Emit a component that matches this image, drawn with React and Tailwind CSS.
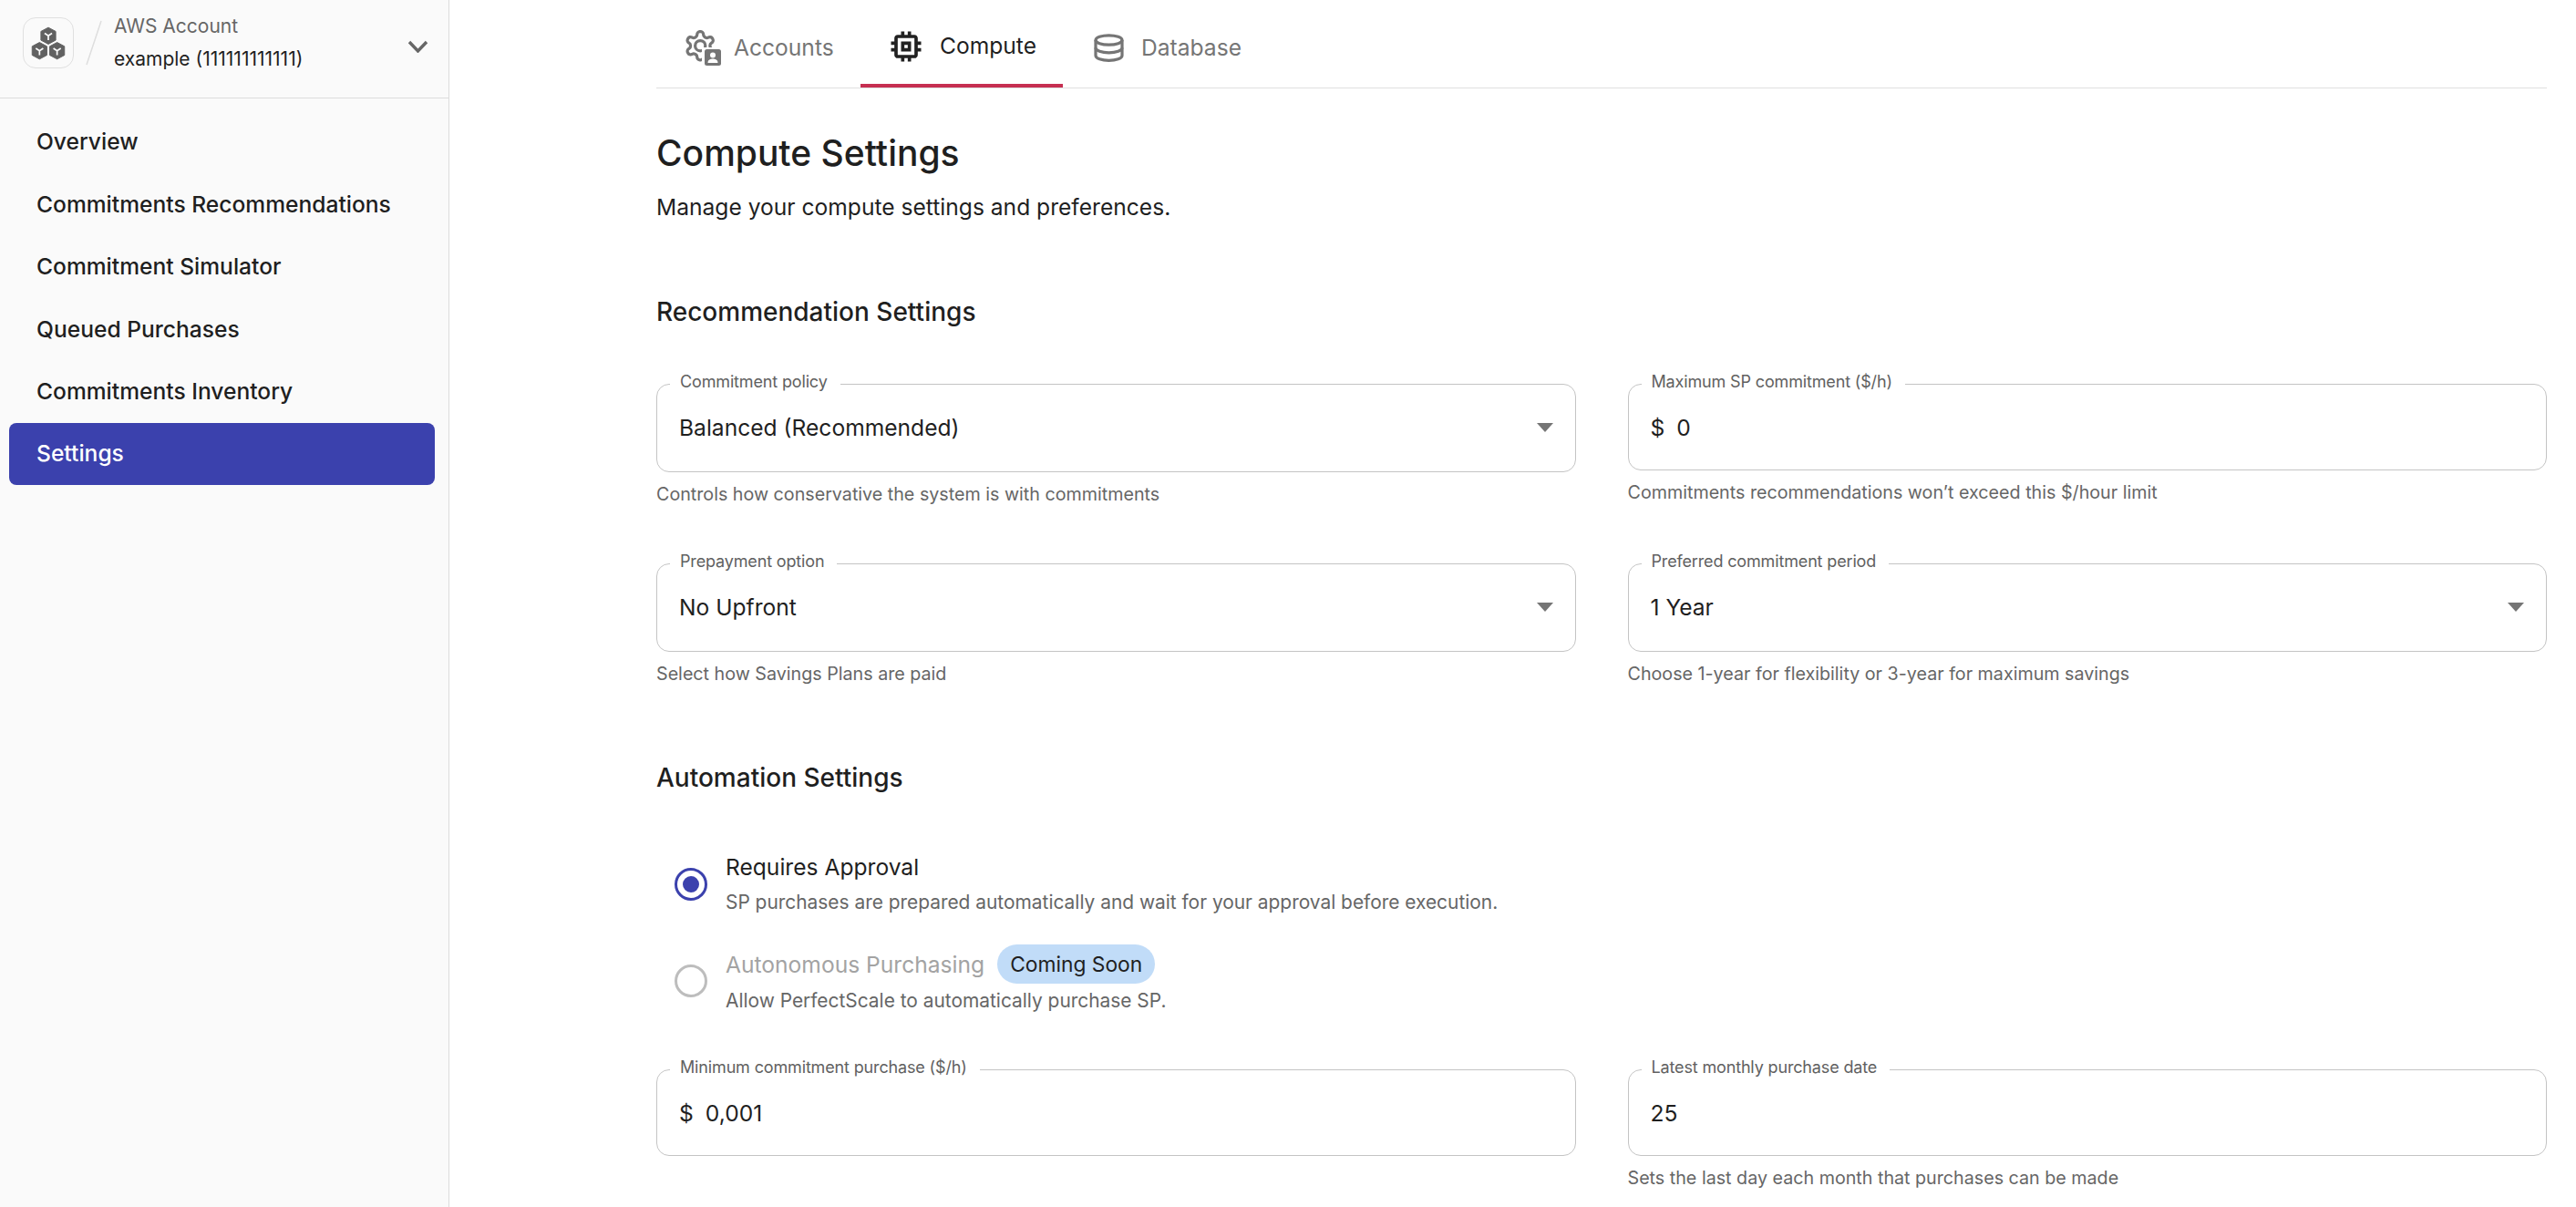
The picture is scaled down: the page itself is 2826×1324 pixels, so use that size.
import React from "react";
import { MdMemory } from "react-icons/md";

const NAV = [
  "Overview",
  "Commitments Recommendations",
  "Commitment Simulator",
  "Queued Purchases",
  "Commitments Inventory",
  "Settings",
];

const CubesLogo = () => (
  <svg width="56" height="56" viewBox="0 0 56 56" fill="#616161">
    {[
      [28, 20],
      [18, 37],
      [38, 37],
    ].map(([x, y]) => (
      <g key={x + "-" + y} transform={`translate(${x} ${y})`}>
        <path d="M0 -9.5 L8.4 -5 V5 L0 9.5 L-8.4 5 V-5 Z" stroke="#616161" strokeWidth="1" strokeLinejoin="round" />
        <path d="M-4.2 -2.8 L0 0 L4.2 -2.8 M0 0 V5" fill="none" stroke="#fafafa" strokeWidth="1.8" />
      </g>
    ))}
  </svg>
);

const AccountsIcon = () => (
  <svg width="40" height="40" viewBox="0 0 40 40" className="shrink-0">
    <g transform="translate(-1.5 -1.5) scale(1.56)" fill="none" stroke="#757575" strokeWidth="2.1" strokeLinejoin="round">
      <path d="M12.22 2h-.44a2 2 0 0 0-2 2v.18a2 2 0 0 1-1 1.73l-.43.25a2 2 0 0 1-2 0l-.15-.08a2 2 0 0 0-2.73.73l-.22.38a2 2 0 0 0 .73 2.73l.15.1a2 2 0 0 1 1 1.72v.51a2 2 0 0 1-1 1.74l-.15.09a2 2 0 0 0-.73 2.73l.22.38a2 2 0 0 0 2.73.73l.15-.08a2 2 0 0 1 2 0l.43.25a2 2 0 0 1 1 1.73V20a2 2 0 0 0 2 2h.44a2 2 0 0 0 2-2v-.18a2 2 0 0 1 1-1.73l.43-.25a2 2 0 0 1 2 0l.15.08a2 2 0 0 0 2.73-.73l.22-.39a2 2 0 0 0-.73-2.73l-.15-.08a2 2 0 0 1-1-1.74v-.5a2 2 0 0 1 1-1.74l.15-.09a2 2 0 0 0 .73-2.73l-.22-.38a2 2 0 0 0-2.73-.73l-.15.08a2 2 0 0 1-2 0l-.43-.25a2 2 0 0 1-1-1.73V4a2 2 0 0 0-2-2z" />
      <circle cx="12" cy="12" r="3.6" />
    </g>
    <rect x="19" y="19" width="21" height="21" fill="#ffffff" />
    <rect x="22" y="21" width="18" height="18" rx="2.5" fill="#757575" />
    <circle cx="31" cy="27.5" r="3" fill="#ffffff" />
    <path d="M25.5 36 c0 -3.5 3 -4.5 5.5 -4.5 s5.5 1 5.5 4.5 z" fill="#ffffff" />
  </svg>
);

const DatabaseIcon = () => (
  <svg width="33" height="31" viewBox="0 0 33 31" fill="none" stroke="#757575" strokeWidth="3.2" className="shrink-0">
    <ellipse cx="16.5" cy="7" rx="14.5" ry="5.2" />
    <path d="M2 7 V24 C2 27 8.5 29.4 16.5 29.4 S31 27 31 24 V7" />
    <path d="M2 15.5 C2 18.5 8.5 20.8 16.5 20.8 S31 18.5 31 15.5" />
  </svg>
);

const Caret = () => (
  <svg width="18" height="10" viewBox="0 0 18 10" className="shrink-0">
    <path d="M0 0 H18 L9 10 Z" fill="#757575" />
  </svg>
);

const Field = ({ label, children, help, short }) => (
  <div>
    <fieldset className="rounded-[14px] border border-[#c4c4c4] px-[24px]">
      <legend className="ml-[-10px] pb-[5px] pl-[11px] pr-[14px] text-[18px] leading-[18px] tracking-[-0.15px] text-[#616161]">
        {label}
      </legend>
      <div className={`flex h-[72px] items-center justify-between text-[24.6px] text-[#1f1f1f] ${short ? "mb-[10px]" : "mb-[12px]"}`}>
        {children}
      </div>
    </fieldset>
    {help && <p className="mt-[13px] text-[19.7px] leading-[22px] text-[#666666]">{help}</p>}
  </div>
);

const Money = ({ value }) => (
  <span>
    <span className="mr-[13px]">$</span>
    {value}
  </span>
);

const App = () => {
  return (
    <div className="flex h-[1324px] w-[2826px] overflow-hidden bg-white font-['Inter',sans-serif]">
      <aside className="w-[493px] shrink-0 border-r border-[#dcdcdc] bg-[#fafafa]">
        <div className="flex h-[108px] items-center border-b border-[#dcdcdc] pb-[13px] pl-[25px] pr-[22px]">
          <div className="flex h-[56px] w-[56px] shrink-0 items-center justify-center rounded-[14px] border border-[#e0e0e0]">
            <CubesLogo />
          </div>
          <svg width="18" height="50" viewBox="0 0 18 50" className="ml-[13px] shrink-0">
            <path d="M17 1 L1 49" stroke="#dedede" strokeWidth="1.5" />
          </svg>
          <div className="ml-[13px] flex-1">
            <div className="text-[21px] leading-[26px] text-[#666666]">AWS Account</div>
            <div className="mt-[10px] text-[21px] leading-[26px] text-[#1f1f1f]">example (111111111111)</div>
          </div>
          <svg width="23" height="14" viewBox="0 0 23 14" fill="none" stroke="#666666" strokeWidth="3.4" className="mt-[8px]">
            <path d="M2 2 L11.5 12 L21 2" />
          </svg>
        </div>
        <nav className="flex flex-col gap-[0.5px] px-[10px] pt-[13px] pr-[15px]">
          {NAV.map((item) => (
            <div
              key={item}
              className={`flex h-[68px] items-center rounded-[8px] pl-[30px] text-[24.6px] font-medium ${
                item === "Settings" ? "bg-[#3b41ad] text-white" : "pt-[1px] text-[#1f1f1f]"
              }`}
            >
              {item}
            </div>
          ))}
        </nav>
      </aside>

      <main className="min-w-0 flex-1 pl-[227px] pr-[32px]">
        <div className="flex h-[97px] border-b border-[#e0e0e0] pl-[31px] text-[24.6px]">
          <div className="flex h-[96px] w-[193px] items-center text-[#757575]">
            <span className="mt-[9px] flex items-center gap-[14px]">
              <AccountsIcon />
              Accounts
            </span>
          </div>
          <div className="flex h-[96px] w-[222px] items-center border-b-4 border-[#c62f51] pl-[28px] text-[#1f1f1f]">
            <span className="mt-[9px] flex items-center gap-[15px]">
              <MdMemory size={44} color="#212121" />
              Compute
            </span>
          </div>
          <div className="ml-[34px] flex h-[96px] items-center text-[#757575]">
            <span className="mt-[9px] flex items-center gap-[19px]">
              <DatabaseIcon />
              Database
            </span>
          </div>
        </div>

        <h1 className="mt-[48px] text-[39px] font-medium leading-[46px] text-[#1f1f1f]">Compute Settings</h1>
        <p className="mt-[21px] text-[24.6px] leading-[30px] text-[#1f1f1f]">Manage your compute settings and preferences.</p>

        <h2 className="mt-[82px] text-[28px] font-medium leading-[36px] text-[#1f1f1f]">Recommendation Settings</h2>

        <div className="mt-[50px] grid grid-cols-2 gap-x-[57px] gap-y-[54px]">
          <Field label="Commitment policy" help="Controls how conservative the system is with commitments">
            Balanced (Recommended)
            <Caret />
          </Field>
          <Field label="Maximum SP commitment ($/h)" help="Commitments recommendations won’t exceed this $/hour limit" short>
            <Money value="0" />
          </Field>
          <Field label="Prepayment option" help="Select how Savings Plans are paid">
            No Upfront
            <Caret />
          </Field>
          <Field label="Preferred commitment period" help="Choose 1-year for flexibility or 3-year for maximum savings">
            1 Year
            <Caret />
          </Field>
        </div>

        <h2 className="mt-[85px] text-[28px] font-medium leading-[36px] text-[#1f1f1f]">Automation Settings</h2>

        <div className="mt-[65px] pl-[20px]">
          <div className="flex items-center gap-[20px]">
            <span className="flex h-[36px] w-[36px] items-center justify-center rounded-full border-[3.5px] border-[#3b41ad]">
              <span className="h-[18px] w-[18px] rounded-full bg-[#3b41ad]" />
            </span>
            <div>
              <div className="text-[24.6px] leading-[30px] text-[#1f1f1f]">Requires Approval</div>
              <div className="mt-[11px] text-[20.9px] leading-[26px] text-[#666666]">
                SP purchases are prepared automatically and wait for your approval before execution.
              </div>
            </div>
          </div>
          <div className="mt-[33px] flex items-center gap-[20px]">
            <span className="mt-[4px] h-[36px] w-[36px] rounded-full border-[3.5px] border-[#bdbdbd]" />
            <div>
              <div className="flex items-center text-[24.6px] leading-[30px] text-[#a3a3a3]">
                Autonomous Purchasing
                <span className="ml-[14px] flex h-[43px] items-center rounded-full bg-[#c1dcf8] px-[14px] text-[22.8px] text-[#1f1f1f]">
                  Coming Soon
                </span>
              </div>
              <div className="mt-[6px] text-[20.9px] leading-[26px] text-[#666666]">
                Allow PerfectScale to automatically purchase SP.
              </div>
            </div>
          </div>
        </div>

        <div className="mt-[51px] grid grid-cols-2 gap-x-[57px]">
          <Field label="Minimum commitment purchase ($/h)" short>
            <Money value="0,001" />
          </Field>
          <Field label="Latest monthly purchase date" help="Sets the last day each month that purchases can be made" short>
            25
          </Field>
        </div>
      </main>
    </div>
  );
};

export default App;
